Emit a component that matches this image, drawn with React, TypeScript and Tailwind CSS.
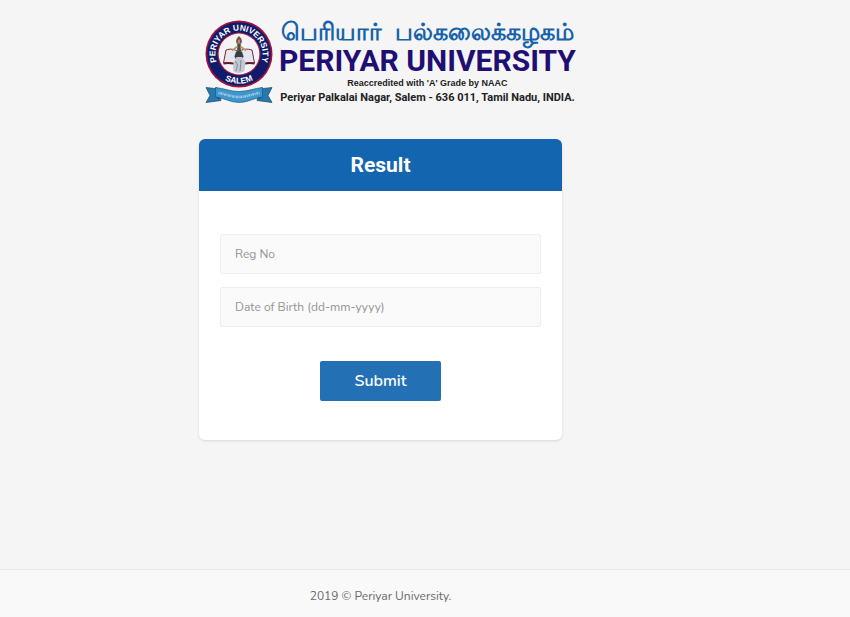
import { useState } from "react";
import type { FormEvent } from "react";

function Seal() {
  return (
    <svg
      viewBox="0 0 68 84"
      className="h-[84px] w-[68px] shrink-0"
      role="img"
      aria-label="Periyar University seal"
    >
      <defs>
        <path id="ring-bottom" d="M4.400 34a29.600 29.600 0 0 0 59.200 0" />
        <path id="ring-text" d="M14.500 47.500A23.600 23.600 0 1 1 53.500 47.500" />
      </defs>

      <circle cx="34" cy="34" r="33.5" fill="#a3123f" />
      <circle cx="34" cy="34" r="31.8" fill="#101c6b" />
      <circle cx="34" cy="34" r="21.5" fill="#b3203f" />
      <circle cx="34" cy="34" r="20.4" fill="#f4f4f6" />

      <text
        fill="#fff"
        fontFamily="Liberation Sans, sans-serif"
        fontWeight="700"
        fontSize="8.4"
        textAnchor="middle"
      >
        <textPath href="#ring-text" startOffset="50%">
          PERIYAR UNIVERSITY
        </textPath>
      </text>
      <text
        fill="#fff"
        fontFamily="Liberation Sans, sans-serif"
        fontWeight="700"
        fontSize="8.4"
        textAnchor="middle"
      >
        <textPath href="#ring-bottom" startOffset="50%">
          SALEM
        </textPath>
      </text>

      {/* open book */}
      <path
        d="M21 30c4-1.500 8-1 12.500 1.500C38 29 42 28.500 47 30l2.500 13c-5-1-10-.5-15.500 2-5.500-2.500-10.500-3-15.500-2z"
        fill="#e6e6f0"
        stroke="#7d2733"
        strokeWidth="1"
      />
      <path
        d="M18.500 43.500c5-1 10-.5 15.500 2 5.500-2.500 10.500-3 15.500-2"
        fill="none"
        stroke="#5c1d28"
        strokeWidth="1.800"
      />

      {/* torch */}
      <path d="M34 16c-3 2.500-3.400 5-2.400 7.500h4.800c1-2.500.6-5-2.400-7.500z" fill="#6e5348" />
      <path d="M34 19c-1.200 1.500-1.400 2.700-.9 4h1.800c.5-1.300.3-2.500-.9-4z" fill="#d08a4a" />
      <path d="M32.200 23.500h3.600v9h-3.600z" fill="#4a4a52" />
      <path d="M27 30.500l5.500-4M41 30.500l-5.500-4" stroke="#b99a4f" strokeWidth="1.600" />

      {/* figure */}
      <path d="M31 31.500h6l1.500 5-1.500 3h-6l-1.500-3z" fill="#3a3d47" />
      <path d="M31.500 37h5.500l3.500 5-1 9c-3.500 2.500-8 2.500-11 .5l-.5-7z" fill="#c3c8d2" />
      <path d="M30.500 41l2 4-1.500 6M36 40l-1 11" fill="none" stroke="#848b9a" />

      {/* ribbon */}
      <path d="M1 67.500l13 1.500 2 11.500L1 82.500l4-7z" fill="#2878b0" stroke="#174766" strokeWidth=".7" />
      <path d="M67 67.500L54 69l-2 11.500 15 2-4-7z" fill="#2878b0" stroke="#174766" strokeWidth=".7" />
      <path d="M10.500 67.500l4 .8v11l-4-2.300zM57.500 67.500l-4 .8v11l4-2.300z" fill="#143f60" />
      <path
        d="M10.500 67.500c8 .8 15 4 23.500 4s15.500-3.200 23.500-4v9.500c-8 .8-15 5.500-23.500 5.500S18.500 77.800 10.500 77z"
        fill="#3e96cc"
        stroke="#1d5c86"
        strokeWidth=".7"
      />
      <path
        d="M13.500 73c7 1 13 4 20.500 4s13.500-3 20.500-4"
        fill="none"
        stroke="#a5cfe6"
        strokeWidth="2.600"
        strokeDasharray="1 .8 1.600 .7"
      />
    </svg>
  );
}

function Logo() {
  return (
    <a href="#" className="flex w-max items-start gap-[6px] whitespace-nowrap">
      <Seal />
      <div className="flex flex-col items-center font-['Liberation_Sans',sans-serif] font-bold text-[#222]">
        <span className="text-[24px] font-semibold leading-[24px] text-[#1763ab]">
          பெரியார்&nbsp; பல்கலைக்கழகம்
        </span>
        <span className="font-['Roboto',sans-serif] text-[30px] leading-[33px] text-[#1f0f73]">
          PERIYAR UNIVERSITY
        </span>
        <span className="text-[9px] leading-[13px]">
          Reaccredited with 'A' Grade by NAAC
        </span>
        <span className="font-['Roboto',sans-serif] text-[11px] leading-[16px]">
          Periyar Palkalai Nagar, Salem - 636 011, Tamil Nadu, INDIA.
        </span>
      </div>
    </a>
  );
}

interface FieldProps {
  label: string;
  value: string;
  onChange: (value: string) => void;
}

function Field({ label, value, onChange }: FieldProps) {
  return (
    <input
      type="text"
      aria-label={label}
      placeholder={label}
      value={value}
      onChange={(e) => onChange(e.target.value)}
      className="block h-10 w-full rounded-xs border border-[#eeeeee] bg-[#fafafa] px-[14px] text-[12px] text-[#555] outline-none placeholder:text-[#949494]"
    />
  );
}

export default function App() {
  const [regNo, setRegNo] = useState("");
  const [birthDate, setBirthDate] = useState("");

  const handleSubmit = (e: FormEvent) => {
    e.preventDefault();
  };

  return (
    <div className="flex min-h-screen flex-col bg-[#f5f5f5] font-['Nunito','Lato',sans-serif]">
      <main className="flex flex-1 flex-col items-center pt-5 pb-8 pr-[89px]">
        <div className="w-full max-w-[363px]">
          <div className="pl-[6px]">
            <Logo />
          </div>

          <section className="mt-[33px] overflow-hidden rounded-md bg-white shadow-sm">
            <h1 className="bg-[#1265ae] text-center font-['Roboto',sans-serif] text-[21px] font-bold leading-[52px] text-white">
              Result
            </h1>
            <form
              onSubmit={handleSubmit}
              className="flex flex-col gap-[13px] px-[21px] pt-[43px] pb-[39px]"
            >
              <Field label="Reg No" value={regNo} onChange={setRegNo} />
              <Field
                label="Date of Birth (dd-mm-yyyy)"
                value={birthDate}
                onChange={setBirthDate}
              />
              <button
                type="submit"
                className="mt-[21px] h-10 w-[121px] self-center rounded-xs bg-[#2470b4] text-[16px] font-semibold text-white"
              >
                Submit
              </button>
            </form>
          </section>
        </div>
      </main>

      <footer className="border-t border-[#e8e8e8] bg-[#f9f9f9] pt-4 pr-[89px] pb-[11px] text-center text-[12px] leading-5 text-[#6a6a6a]">
        2019 © Periyar University.
      </footer>
    </div>
  );
}
